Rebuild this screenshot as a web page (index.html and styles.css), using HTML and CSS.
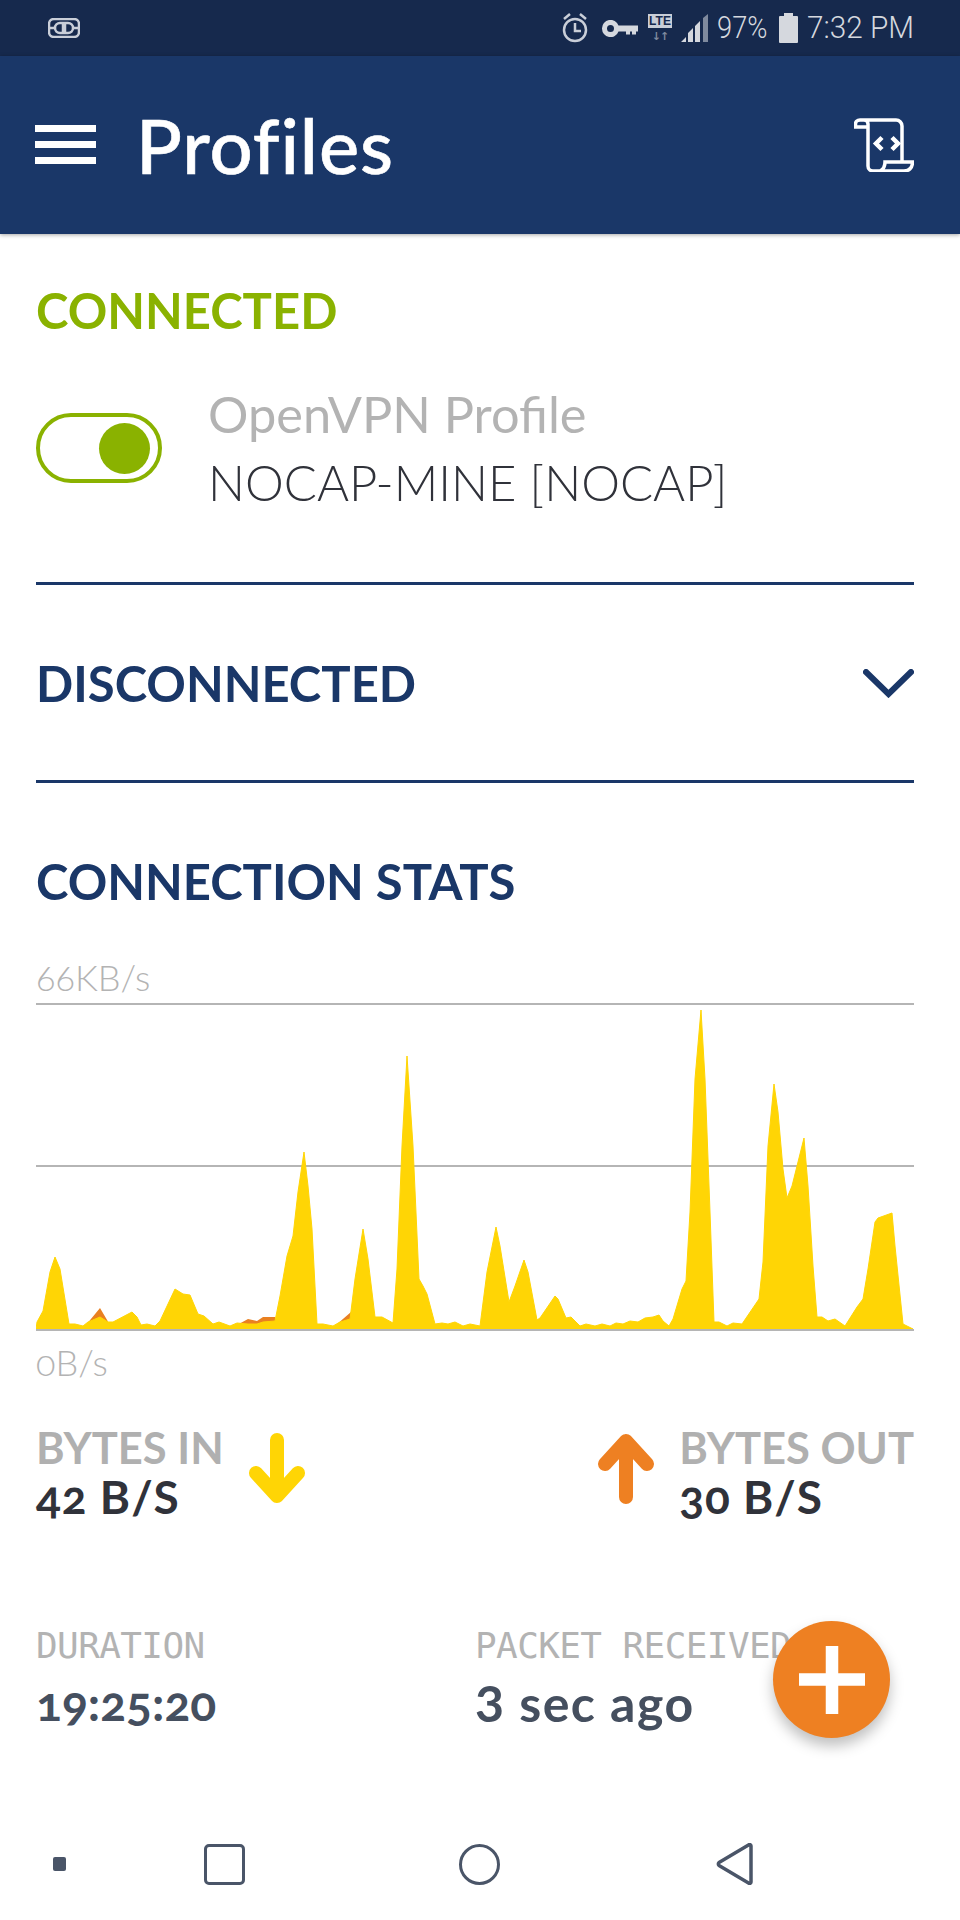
FILE: index.html
```html
<!DOCTYPE html>
<html lang="en">
<head>
<meta charset="utf-8">
<title>Profiles</title>
<link rel="stylesheet" href="styles.css">
</head>
<body>
<div class="page">
  <header class="status">
    <svg class="tether" viewBox="0 0 32 20"><rect x="1" y="1" width="30" height="18" rx="5"/><path d="M1 10h7M24 10h7M15 5h-3a5 5 0 0 0 0 10h3zM17 5h3a5 5 0 0 1 0 10h-3z"/></svg>
    <div class="status-right">
      <svg class="alarm" viewBox="0 0 26 30"><circle cx="13" cy="17" r="11"/><path d="M13 10v8h6M2 6l6-5M24 6l-6-5"/></svg>
      <svg class="key" viewBox="0 0 36 17"><path class="solid" fill-rule="evenodd" d="M0 8.500a8.500 8.500 0 0 1 16.500-3H36v6h-2v3h-4v-3h-2v3h-4v-3h-7.500A8.500 8.500 0 0 1 0 8.500zM8.500 5a3.500 3.500 0 1 0 0 7 3.500 3.500 0 0 0 0-7z"/></svg>
      <div class="lte"><span class="lte-box">LTE</span><span class="lte-arrows">↓↑</span></div>
      <svg class="signal" viewBox="0 0 28 28"><path class="solid" d="M0 28l5-5v5zM7 28v-9l5-5v14zM14 28V12l5-5v21z"/><path class="dim" d="M22 28V4l5-4v28z"/></svg>
      <span class="status-text pct">97%</span>
      <svg class="battery" viewBox="0 0 19 30"><path class="solid" d="M5 0h9v3h4a1 1 0 0 1 1 1v25a1 1 0 0 1-1 1H1a1 1 0 0 1-1-1V4a1 1 0 0 1 1-1h4z"/></svg>
      <span class="status-text time">7:32 PM</span>
    </div>
  </header>

  <div class="appbar">
    <div class="menu"><i></i><i></i><i></i></div>
    <h1 class="title">Profiles</h1>
    <svg class="scroll" viewBox="0 0 60 54"><path class="scroll-outline" d="M42 2H6C3 2 1.500 4 1.500 6v3H14v39a5 5 0 0 0 5 5h31c5 0 8.500-3 8.500-9H31c0 4-1 7-5 9M42 2a6 6 0 0 1 6 6v36M14 9V6a4 4 0 0 0-4-4"/><path class="scroll-code" d="M28 19.500l-6 6 6 6M38 19.500l6 6-6 6"/></svg>
  </div>

  <main class="content">
    <h2 class="section-title green">CONNECTED</h2>
    <div class="profile">
      <div class="toggle"><span class="knob"></span></div>
      <div class="profile-text">
        <div class="profile-kind">OpenVPN Profile</div>
        <div class="profile-name">NOCAP-MINE [NOCAP]</div>
      </div>
    </div>
    <hr class="rule rule-first">
    <div class="collapse">
      <h2 class="section-title navy">DISCONNECTED</h2>
      <svg class="chevron" viewBox="0 0 51 29"><path d="M3 3l22.500 22L48 3"/></svg>
    </div>
    <hr class="rule">
    <h2 class="section-title navy stats-title">CONNECTION STATS</h2>
    <div class="axis axis-top">66KB/s</div>
    <svg class="chart" viewBox="36 1000 878 334">
      <line class="grid" x1="36" x2="914" y1="1005" y2="1005"/>
      <line class="grid" x1="36" x2="914" y1="1167" y2="1167"/>
      <path class="out" d="M86 1326L100 1309L110 1326ZM237 1326L248 1320L257 1322L263 1318L275 1318L280 1326ZM336 1326L351 1313L351 1326Z"/>
      <path class="in" d="M36 1330L37 1323L43 1312L50 1273L55 1258L60 1270L69 1325L75 1325L83 1327L88 1323L100 1318L108 1323L113 1323L132 1313L137 1318L141 1326L147 1325L155 1327L160 1322L175 1290L183 1295L190 1296L198 1315L204 1317L213 1325L219 1323L230 1327L237 1324L248 1325L257 1325L263 1323L275 1322L280 1297L287 1257L293 1237L298 1193L304 1153L308 1187L312 1230L317 1325L323 1325L333 1327L340 1323L350 1320L355 1280L363 1230L368 1260L375 1318L382 1318L393 1324L397 1270L402 1147L407 1057L413 1147L419 1280L423 1287L427 1295L435 1325L442 1324L448 1325L455 1323L463 1327L470 1325L480 1327L487 1273L496 1228L500 1247L509 1303L515 1287L524 1261L528 1273L537 1321L540 1319L555 1297L558 1300L566 1319L571 1318L580 1327L586 1325L595 1327L602 1325L610 1327L616 1324L623 1325L630 1322L638 1323L645 1319L653 1318L659 1316L663 1322L669 1327L673 1320L682 1290L686 1282L690 1213L695 1080L701 1011L705 1080L710 1213L714 1323L719 1323L727 1327L733 1324L742 1325L759 1300L763 1263L768 1147L774 1085L778 1113L783 1170L787 1199L792 1187L804 1139L808 1187L813 1267L817 1318L822 1318L828 1322L835 1320L845 1327L857 1308L863 1300L868 1270L875 1223L878 1219L892 1214L895 1247L903 1325L913 1330Z"/>
      <line class="grid" x1="36" x2="914" y1="1331" y2="1331"/>
    </svg>
    <div class="axis axis-bottom">0B/s</div>
    <div class="rates">
      <div class="rate">
        <div><div class="rate-label">BYTES IN</div><div class="rate-value">42 B/S</div></div>
        <svg class="arrow arrow-in" viewBox="0 0 56 71"><path d="M28 7v56M7 40l21 23 21-23"/></svg>
      </div>
      <div class="rate">
        <svg class="arrow arrow-out" viewBox="0 0 56 71"><path d="M28 64V8M7 31L28 8l21 23"/></svg>
        <div><div class="rate-label">BYTES OUT</div><div class="rate-value">30 B/S</div></div>
      </div>
    </div>
    <div class="facts">
      <div><div class="fact-label">DURATION</div><div class="fact-value fact-time">19:25:20</div></div>
      <div><div class="fact-label">PACKET RECEIVED</div><div class="fact-value">3 sec ago</div></div>
    </div>
  </main>

  <button class="fab" aria-label="Add"><svg viewBox="0 0 66 68"><path d="M33 0v68M0 33.500h66"/></svg></button>

  <nav class="navbar">
    <span class="nav-dot"></span>
    <span class="nav-square"></span>
    <span class="nav-circle"></span>
    <svg class="nav-back" viewBox="0 0 38 42"><path d="M35 3v36a1.500 1.500 0 0 1-2.500 1L3 22.500a2 2 0 0 1 0-3L32.500 2A1.500 1.500 0 0 1 35 3z"/></svg>
  </nav>
</div>
</body>
</html>
```
FILE: styles.css
```css
* { box-sizing: border-box; }
html, body { margin: 0; padding: 0; background: #fff; }
.page {
  position: relative;
  width: 960px;
  height: 1920px;
  display: flex;
  flex-direction: column;
  overflow: hidden;
  font-family: "Lato", "Open Sans", sans-serif;
}

.status {
  height: 56px;
  flex: none;
  background: #16294d;
  display: flex;
  align-items: center;
  justify-content: space-between;
  padding: 0 49px 0 48px;
}
.status svg { fill: none; stroke: #c9ced8; stroke-width: 2.500; display: block; }
.status svg .solid { fill: #d5d8de; stroke: none; }
.status svg .dim { fill: #7f8a9e; stroke: none; }
.tether { width: 32px; height: 20px; }
.status-right { display: flex; align-items: center; }
.alarm { width: 26px; height: 30px; margin-right: 14px; }
.key { width: 36px; height: 17px; margin-right: 10px; }
.lte { width: 24px; display: flex; flex-direction: column; align-items: center; margin-right: 9px; }
.lte-box {
  width: 24px; height: 14px;
  background: #c9ced8; color: #16294d;
  font: 700 12px/14px "Liberation Sans", sans-serif;
  text-align: center;
}
.lte-arrows { font: 700 11px/13px "DejaVu Sans", sans-serif; color: #7f8a9e; margin-top: 2px; letter-spacing: -1px; }
.signal { width: 28px; height: 28px; margin-right: 8px; }
.status-text {
  font-family: "Roboto", "Liberation Sans", sans-serif;
  font-weight: 300;
  font-size: 31px;
  line-height: 30px;
  color: #d5d8de;
  white-space: nowrap;
  transform-origin: left center;
}
.pct { width: 50px; margin-right: 12px; transform: scaleX(.88); }
.battery { width: 19px; height: 30px; margin-right: 9px; }
.time { width: 104px; transform: scaleX(.96); }

.appbar {
  height: 178px;
  flex: none;
  background: #1a3768;
  display: flex;
  align-items: center;
  padding: 0 46px 0 35px;
  box-shadow: 0 1px 4px rgba(0,0,0,.35);
  z-index: 1;
}
.menu { width: 61px; display: flex; flex-direction: column; gap: 9px; margin-right: 40px; margin-top: -1px; }
.menu i { display: block; height: 7px; background: #fff; }
.title { flex: 1; margin: 0; color: #fff; font-size: 76px; line-height: 80px; font-weight: 500; letter-spacing: .9px; -webkit-text-stroke: .6px #fff; }
.scroll { width: 60px; height: 54px; fill: none; stroke: #fff; }
.scroll-outline { stroke-width: 3.500; }
.scroll-code { stroke-width: 4.500; }

.content { padding: 0 46px 0 36px; flex: 1; }
.section-title { margin: 0; font-size: 49px; line-height: 60px; font-weight: 700; white-space: nowrap; }
.green { color: #8ab200; margin-top: 46px; }
.navy { color: #1a3768; }

.profile { display: flex; align-items: center; margin-top: 40px; }
.toggle {
  width: 126px; height: 70px;
  border: 4px solid #8ab200; border-radius: 35px;
  display: flex; align-items: center; justify-content: flex-end;
  padding-right: 8px;
  margin-right: 46px;
}
.knob { width: 51px; height: 51px; border-radius: 50%; background: #8ab200; }
.profile-kind { color: #b3b3b3; font-size: 50.500px; line-height: 68px; white-space: nowrap; }
.profile-name { color: #30323a; font-size: 49px; line-height: 68px; font-weight: 300; white-space: nowrap; }

.rule { margin: 0; border: 0; height: 3px; background: #1a3768; }
.rule-first { margin-top: 66px; }
.collapse { height: 195px; display: flex; align-items: center; justify-content: space-between; }
.chevron { width: 51px; height: 29px; fill: none; stroke: #1a3768; stroke-width: 6; stroke-linecap: round; stroke-linejoin: miter; margin-top: 2px; }
.stats-title { margin-top: 68px; }

.axis { color: #b3b3b3; font-size: 36px; line-height: 36px; font-weight: 300; font-variant-numeric: oldstyle-nums; }
.axis-top { margin-top: 48px; }
.axis-bottom { margin-top: 11px; }
.chart { display: block; width: 878px; height: 334px; margin-top: 4px; }
.grid { stroke: #b5b5b5; stroke-width: 2; }
.in { fill: #ffd505; stroke: #ffd505; stroke-width: 1; stroke-linejoin: round; }
.out { fill: #e98021; }

.rates { display: flex; justify-content: space-between; margin-top: 49px; }
.rate { display: flex; align-items: flex-start; gap: 25px; }
.rate-label { color: #b0b0b0; font-size: 43.500px; line-height: 36px; font-weight: 700; white-space: nowrap; }
.rate-value { color: #30323a; font-size: 46px; line-height: 36px; font-weight: 700; letter-spacing: 1px; margin-top: 14px; white-space: nowrap; font-variant-numeric: oldstyle-nums; }
.arrow { width: 56px; height: 71px; fill: none; stroke-width: 14; stroke-linecap: round; stroke-linejoin: round; margin-top: 4px; }
.arrow-in { stroke: #ffd505; }
.arrow-out { stroke: #ee8022; }

.facts { display: grid; grid-template-columns: 439px 1fr; margin-top: 113px; }
.fact-label { color: #b3b3b3; font-family: "DejaVu Sans Mono", monospace; font-size: 36px; letter-spacing: -.6px; line-height: 36px; white-space: nowrap; }
.fact-value { color: #454f5f; font-size: 50px; line-height: 36px; font-weight: 700; letter-spacing: 1.500px; margin-top: 21px; white-space: nowrap; }
.fact-time { font-size: 48px; letter-spacing: 0; font-variant-numeric: oldstyle-nums; }

.fab {
  position: absolute;
  left: 773px; top: 1621px;
  width: 117px; height: 117px;
  border: 0; border-radius: 50%; padding: 0;
  background: #ee8022;
  box-shadow: 0 8px 14px rgba(0,0,0,.25);
  display: flex; align-items: center; justify-content: center;
}
.fab svg { width: 66px; height: 68px; fill: none; stroke: #fff; stroke-width: 12.500; }

.navbar { height: 112px; flex: none; position: relative; display: flex; align-items: center; padding-left: 53px; }
.nav-dot { width: 13px; height: 14px; background: #4a5568; border-radius: 2px; margin-right: 138px; }
.nav-square { width: 41px; height: 41px; border: 3.500px solid #4a5568; border-radius: 5px; margin-right: 214px; }
.nav-circle { width: 41px; height: 41px; border: 3.500px solid #4a5568; border-radius: 50%; margin-right: 216px; }
.nav-back { width: 38px; height: 42px; fill: none; stroke: #4a5568; stroke-width: 3.500; stroke-linejoin: round; }
```
